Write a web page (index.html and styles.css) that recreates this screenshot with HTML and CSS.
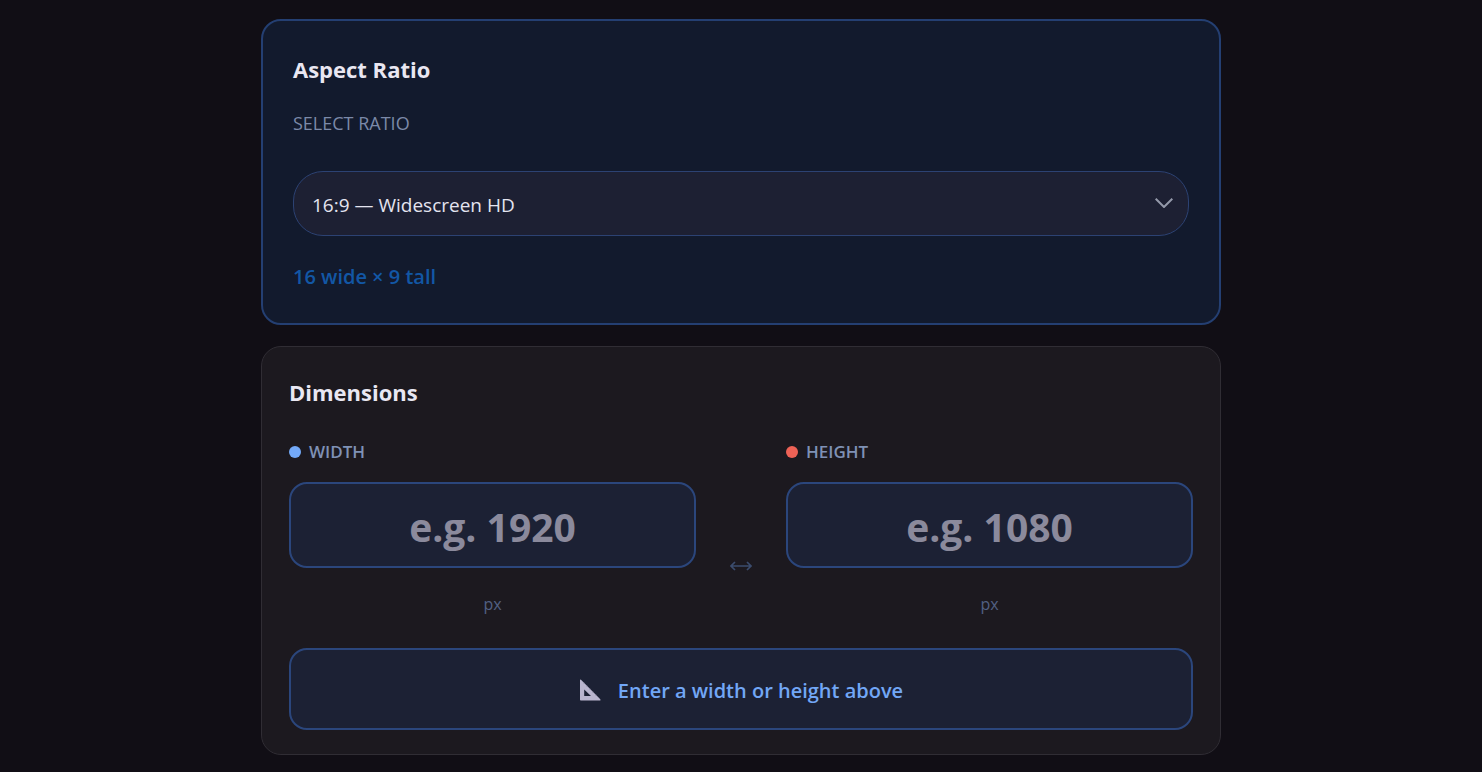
FILE: index.html
```html
<!DOCTYPE html>
<html lang="en">
<head>
    <meta charset="UTF-8">
    <meta name="viewport" content="width=device-width, initial-scale=1.0">
    <title>Aspect Ratio Calculator</title>
    <link rel="stylesheet" href="styles.css">
</head>
<body>
    <main class="container">
        <section class="card ratio-card">
            <h2>Aspect Ratio</h2>
            <label class="ratio-label" for="ratio">SELECT RATIO</label>
            <div class="select-wrapper">
                <select id="ratio" class="ratio-select">
                    <option value="16:9">16:9 — Widescreen HD</option>
                </select>
                <svg class="chevron" viewBox="0 0 18 10" aria-hidden="true">
                    <path d="M.7 .7L9 9l8.300-8.300" fill="none" stroke="currentColor" stroke-width="2"/>
                </svg>
            </div>
            <p class="ratio-info">16 wide × 9 tall</p>
        </section>

        <section class="card dimensions-card">
            <h2>Dimensions</h2>
            <div class="dimensions">
                <div class="field">
                    <label class="field-label" for="width"><span class="dot dot-width"></span>WIDTH</label>
                    <input type="text" inputmode="numeric" id="width" class="field-input" placeholder="e.g. 1920">
                    <span class="unit">px</span>
                </div>
                <svg class="arrow" viewBox="0 0 22 10" aria-hidden="true">
                    <path d="M1 5h20M5 1L1 5l4 4M17 1l4 4-4 4" fill="none" stroke="currentColor" stroke-width="1.7"/>
                </svg>
                <div class="field">
                    <label class="field-label" for="height"><span class="dot dot-height"></span>HEIGHT</label>
                    <input type="text" inputmode="numeric" id="height" class="field-input" placeholder="e.g. 1080">
                    <span class="unit">px</span>
                </div>
            </div>
            <div class="result">
                <svg class="result-icon" viewBox="0 0 22 22" aria-hidden="true">
                    <path d="M1 1.200Q1 0 2 .8L21.300 20.200Q22 21.500 21 21.500H1.800Q1 21.500 1 20.700ZM5.200 10.500V17H12Z" fill="currentColor" fill-rule="evenodd"/>
                    <path d="M4.500 4.500l.7-.7M7.500 7.500l.7-.7M10.500 10.500l.7-.7M13.500 13.500l.7-.7M16.500 16.500l.7-.7" stroke="#8e8ba3" stroke-width=".6"/>
                </svg>
                <span>Enter a width or height above</span>
            </div>
        </section>
    </main>
</body>
</html>
```

FILE: styles.css
```css
*, *::before, *::after {
    box-sizing: border-box;
}

body {
    margin: 0;
    padding: 19px 20px 16px;
    background: #110e15;
    color: #e9e7f2;
    font-family: "Open Sans", "Noto Sans", sans-serif;
    font-size: 18px;
}

.container {
    max-width: 960px;
    margin: 0 auto;
    display: flex;
    flex-direction: column;
    gap: 21px;
}

.card {
    border-radius: 20px;
}

.ratio-card {
    padding: 32px 30px 31px;
    background: #121a2d;
    border: 2px solid #243f72;
}

.dimensions-card {
    padding: 29px 27px 24px;
    background: #1c191f;
    border: 1px solid #302d34;
}

h2 {
    margin: 0;
    font-size: 22px;
    line-height: 32px;
    font-weight: 700;
}

.ratio-label {
    display: block;
    margin-top: 26px;
    line-height: 24px;
    color: #7b89a8;
}

.select-wrapper {
    position: relative;
    margin-top: 36px;
}

.ratio-select {
    display: block;
    width: 100%;
    height: 65px;
    padding: 2px 48px 0 18px;
    border: 1px solid #2c4273;
    border-radius: 30px;
    background: #1d2033;
    color: #e4e4f0;
    font: inherit;
    font-size: 19px;
    appearance: none;
    cursor: pointer;
}

.chevron {
    position: absolute;
    top: 27px;
    right: 16px;
    width: 18px;
    height: 10px;
    color: #9499aa;
    pointer-events: none;
}

.ratio-info {
    margin: 26px 0 0;
    font-size: 20px;
    line-height: 30px;
    font-weight: 600;
    color: #1257a5;
}

.dimensions {
    display: flex;
    align-items: center;
    margin-top: 32px;
}

.field {
    flex: 1;
    min-width: 0;
    display: flex;
    flex-direction: column;
}

.field-label {
    display: flex;
    align-items: center;
    gap: 8px;
    font-size: 17px;
    line-height: 24px;
    font-weight: 600;
    color: #7f91b5;
}

.dot {
    width: 12px;
    height: 12px;
    border-radius: 50%;
}

.dot-width {
    background: #73a9f8;
}

.dot-height {
    background: #ee6256;
}

.field-input {
    width: 100%;
    height: 86px;
    margin-top: 18px;
    padding: 2px 16px 0;
    border: 2px solid #2b467c;
    border-radius: 18px;
    background: #1c2134;
    color: #e9e7f2;
    font: inherit;
    font-size: 39px;
    font-weight: 700;
    text-align: center;
}

.field-input::placeholder {
    color: #8b8a9c;
    opacity: 1;
}

.field-input:focus,
.ratio-select:focus {
    outline: none;
    border-color: #73a9f8;
}

.unit {
    margin-top: 24px;
    font-size: 16px;
    line-height: 24px;
    text-align: center;
    color: #526083;
}

.arrow {
    flex: none;
    width: 22px;
    height: 10px;
    margin: 76px 34px 0;
    color: #3b4c6d;
}

.result {
    display: flex;
    align-items: center;
    justify-content: center;
    gap: 17px;
    min-height: 82px;
    margin-top: 32px;
    padding: 18px 16px 16px;
    border: 2px solid #2b467c;
    border-radius: 18px;
    background: #1c2134;
    color: #72a7f6;
    font-size: 20px;
    font-weight: 600;
}

.result-icon {
    width: 22px;
    height: 22px;
    color: #b9b5ce;
}
```
